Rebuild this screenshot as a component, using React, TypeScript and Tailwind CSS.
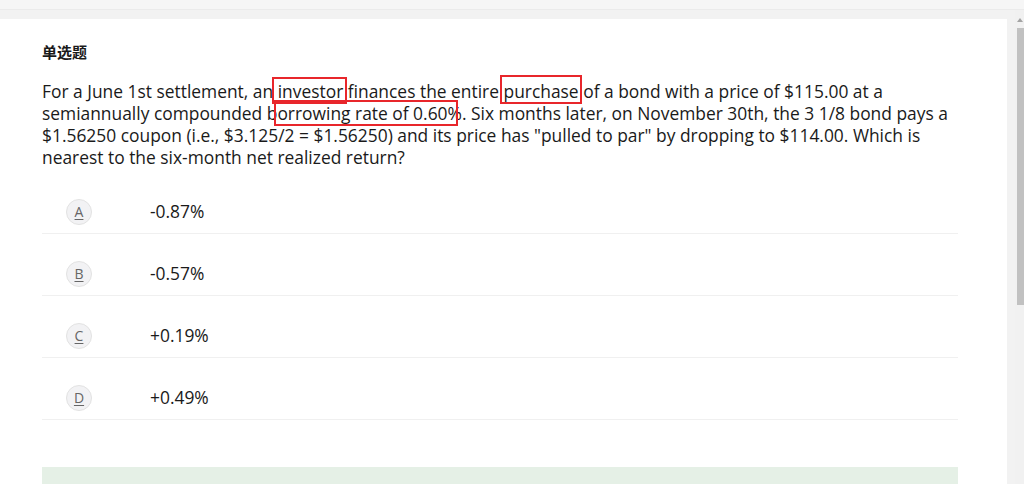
const options = [
  { key: "A", text: "-0.87%" },
  { key: "B", text: "-0.57%" },
  { key: "C", text: "+0.19%" },
  { key: "D", text: "+0.49%" },
];

function Boxed({ children, className = "" }: { children: React.ReactNode; className?: string }) {
  return (
    <span className="relative">
      {children}
      <span className={"pointer-events-none absolute border-2 border-[#e8262b] " + className} />
    </span>
  );
}

export default function App() {
  return (
    <div className="h-[484px] w-[1024px] overflow-hidden bg-[#f2f2f2] flex flex-col">
      {/* top strip */}
      <div className="h-[10px] bg-[#f6f6f6] border-b border-[#ebebeb]" />
      <div className="flex flex-1 min-h-0 pt-[9px]">
        <main className="w-[1007px] bg-white px-[42px] pt-[23px] font-['Open_Sans','Noto_Sans',sans-serif] text-[#1a1a1a]">
          <h2 className="text-[15px] font-bold font-['Noto_Sans_CJK_SC',sans-serif] leading-5 mb-[18px]">单选题</h2>

          <p className="text-[17.4px] leading-[22px]">
            For a June 1st settlement, an{" "}
            <Boxed className="-left-[6px] -right-[4px] -top-[2px] -bottom-[1px]">investor</Boxed>{" "}
            finances the entire{" "}
            <Boxed className="-left-[4px] -right-[3px] -top-[4px] -bottom-[1px]">purchase</Boxed>{" "}
            of a bond with a price of $115.00 at a semiannually compounded b
            <Boxed className="-left-[3px] right-[4px] -top-[1px] -bottom-[1px]">orrowing rate of 0.60%</Boxed>
            . Six months later, on November 30th, the 3 1/8 bond pays a $1.56250 coupon (i.e., $3.125/2 =
            $1.56250) and its price has "pulled to par" by dropping to $114.00. Which is nearest to the
            six-month net realized return?
          </p>

          <ul className="mt-[4px] w-[916px]">
            {options.map((o) => (
              <li key={o.key} className="flex items-center h-[62px] pt-[18px] border-b border-[#f0f0f0]">
                <span className="ml-[24px] flex h-[26px] w-[26px] items-center justify-center rounded-full border border-[#e2e2e2] bg-[#f2f2f4] text-[14px] text-[#666] underline underline-offset-2">
                  {o.key}
                </span>
                <span className="ml-[58px] text-[17.4px]">{o.text}</span>
              </li>
            ))}
          </ul>

          <div className="mt-[47px] h-[40px] w-[916px] bg-[#e5f0e6]" />
        </main>
        <div className="w-[8px] bg-[#f2f2f2]" />
        {/* fake scrollbar */}
        <div className="relative w-[9px] bg-[#f1f1f1] -mt-[9px]">
          <div className="mx-auto mt-[8px] h-0 w-0 border-x-[3px] border-b-[4px] border-x-transparent border-b-[#a3a3a3]" />
          <div className="absolute left-[2px] right-0 top-[18px] h-[277px] bg-[#c1c1c1]" />
        </div>
      </div>
    </div>
  );
}
